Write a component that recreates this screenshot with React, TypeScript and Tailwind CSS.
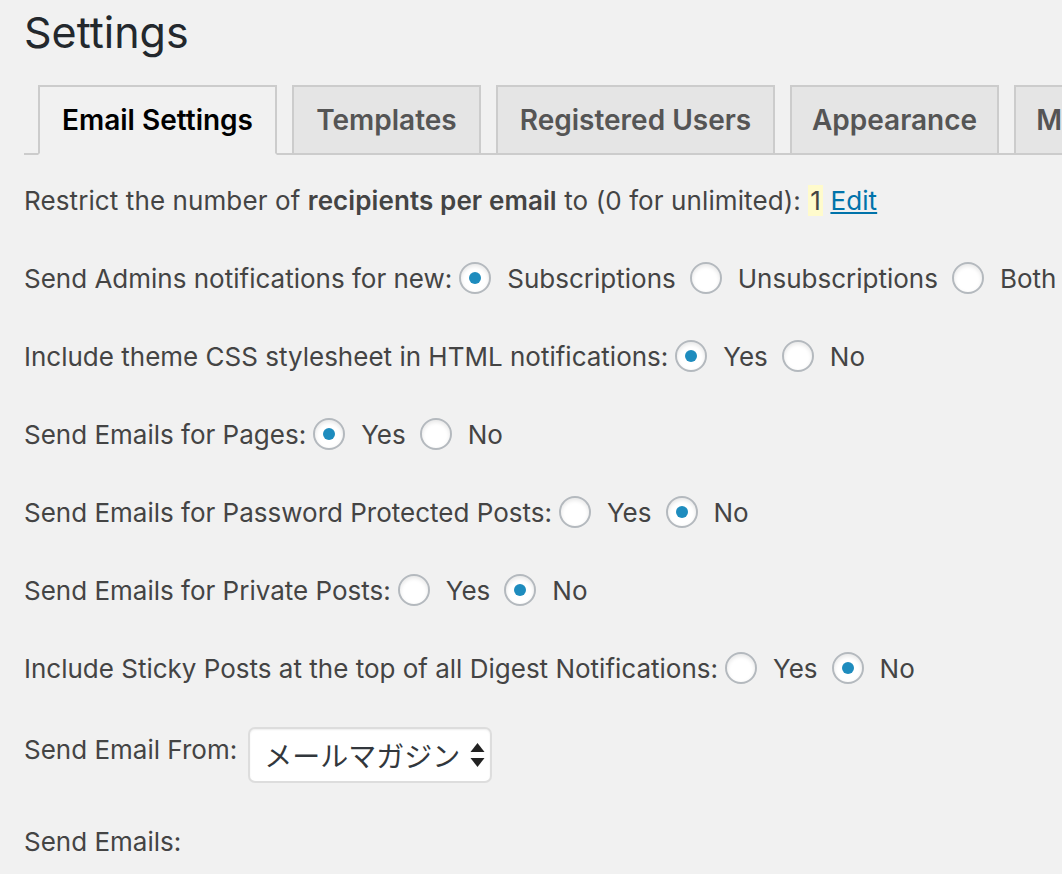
import React from "react"

type Row = {
  label: string
  options: string[]
  checked: number
}

const rows: Row[] = [
  { label: "Send Admins notifications for new:", options: ["Subscriptions", "Unsubscriptions", "Both"], checked: 0 },
  { label: "Include theme CSS stylesheet in HTML notifications:", options: ["Yes", "No"], checked: 0 },
  { label: "Send Emails for Pages:", options: ["Yes", "No"], checked: 0 },
  { label: "Send Emails for Password Protected Posts:", options: ["Yes", "No"], checked: 1 },
  { label: "Send Emails for Private Posts:", options: ["Yes", "No"], checked: 1 },
  { label: "Include Sticky Posts at the top of all Digest Notifications:", options: ["Yes", "No"], checked: 1 },
]

const tabs = [
  { name: "Email Settings", width: "w-[239px]" },
  { name: "Templates", width: "w-[189px]" },
  { name: "Registered Users", width: "w-[279px]" },
  { name: "Appearance", width: "w-[209px]" },
  { name: "Miscellaneous", width: "w-[240px]" },
]

function Radio({ on }: { on: boolean }) {
  return (
    <span className="flex h-[32px] w-[32px] shrink-0 items-center justify-center rounded-full border-2 border-[#b4b9be] bg-white shadow-[inset_0_2px_4px_rgba(0,0,0,0.1)]">
      {on && <span className="h-[12px] w-[12px] rounded-full bg-[#1e8cbe]" />}
    </span>
  )
}

function RadioRow({ row }: { row: Row }) {
  return (
    <div className="flex h-[52px] items-center whitespace-nowrap">
      <span>{row.label}</span>
      {row.options.map((opt, i) => (
        <span key={opt} className={`flex items-center ${i === 0 ? "ml-[7px]" : "ml-[14px]"}`}>
          <Radio on={i === row.checked} />
          <span className="ml-[16px]">{opt}</span>
        </span>
      ))}
    </div>
  )
}

export default function App() {
  return (
    <div
      className="h-[874px] w-[1062px] overflow-hidden bg-[#f1f1f1] pl-[24px] text-[26px] text-[#444]"
      style={{ fontFamily: "Inter, 'Liberation Sans', sans-serif" }}
    >
      <h1 className="h-[64px] text-[43px] leading-[64px] font-normal text-[#23282d]">Settings</h1>

      {/* tab strip */}
      <div className="mt-[21px] flex border-b-2 border-[#ccc] pl-[14px]">
        {tabs.map((tab, i) => (
          <div
            key={tab.name}
            className={`-mb-[2px] flex h-[70px] shrink-0 items-center justify-center border-2 text-[28px] font-semibold whitespace-nowrap ${tab.width} ${
              i === 0
                ? "border-[#ccc] border-b-[#f1f1f1] bg-[#f1f1f1] text-black"
                : "ml-[15px] border-[#ccc] bg-[#e5e5e5] text-[#555]"
            }`}
          >
            {tab.name}
          </div>
        ))}
      </div>

      <div className="mt-[19px] flex flex-col gap-[26px]">
        <div className="flex h-[52px] items-center whitespace-nowrap tracking-[0.1px]">
          <span>
            Restrict the number of <b className="font-semibold">recipients per email</b> to (0 for unlimited):{" "}
            <span className="bg-[#fffbcc] px-[2px]">1</span>{" "}
            <a href="#" className="text-[#0073aa] underline">Edit</a>
          </span>
        </div>
        {rows.map((row) => (
          <RadioRow key={row.label} row={row} />
        ))}
      </div>

      <div className="mt-[26px] flex items-start whitespace-nowrap">
        <span className="mt-[4px] leading-[52px]">Send Email From:</span>
        <div className="mt-[7px] ml-[11px] flex h-[56px] w-[244px] items-center rounded-[7px] border-2 border-[#ddd] bg-white pl-[14px] pr-[4px] shadow-[inset_0_1px_2px_rgba(0,0,0,0.07)]">
          <span
            className="flex-1 text-[28px] text-[#32373c]"
            style={{ fontFamily: "'Noto Sans CJK JP', sans-serif" }}
          >
            メールマガジン
          </span>
          <svg width="17" height="28" viewBox="0 0 17 28" className="shrink-0">
            <path d="M8.5 2 L15.5 11 L1.5 11 Z" fill="#222" />
            <path d="M1.5 17 L15.5 17 L8.5 26 Z" fill="#222" />
          </svg>
        </div>
      </div>

      <div className="mt-[33px] leading-[52px]">Send Emails:</div>
    </div>
  )
}
